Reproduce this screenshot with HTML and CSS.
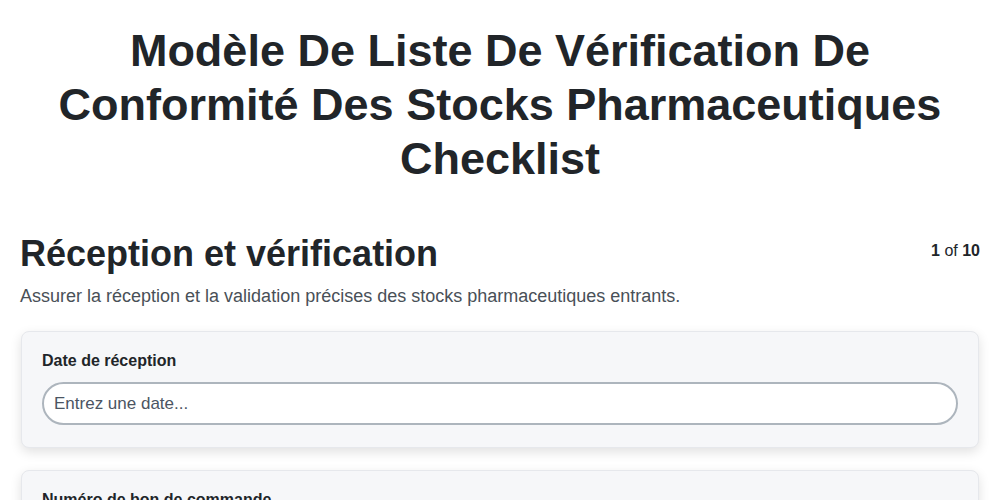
FILE: index.html
```html
<!DOCTYPE html>
<html lang="fr">
<head>
  <meta charset="UTF-8">
  <meta name="viewport" content="width=device-width, initial-scale=1.0">
  <title>Checklist – Conformité des stocks pharmaceutiques</title>
  <link rel="stylesheet" href="styles.css">
</head>
<body>

<h1 class="page-title">Modèle De Liste De Vérification De Conformité Des Stocks Pharmaceutiques Checklist</h1>

<section class="step">
  <div class="step-header">
    <h2>Réception et vérification</h2>
    <span class="step-count"><b>1</b> of <b>10</b></span>
  </div>
  <p class="step-desc">Assurer la réception et la validation précises des stocks pharmaceutiques entrants.</p>

  <div class="field-list">
    <div class="field-card">
      <label for="date">Date de réception</label>
      <input type="text" id="date" class="field-input" placeholder="Entrez une date...">
    </div>

    <div class="field-card">
      <label for="po">Numéro de bon de commande</label>
      <input type="text" id="po" class="field-input" placeholder="Entrez un numéro...">
    </div>
  </div>
</section>

</body>
</html>
```

FILE: styles.css
```css
:root {
  --text: #212529;
  --text-muted: #495057;
  --card-bg: #f6f7f9;
  --card-border: #e6e8ec;
  --input-border: #adb5bd;
}

* {
  margin: 0;
  padding: 0;
  box-sizing: border-box;
}

body {
  font-family: 'Liberation Sans', Arial, sans-serif;
  color: var(--text);
  background: #ffffff;
  padding: 0 20px;
}

.page-title {
  font-size: 45px;
  line-height: 54px;
  text-align: center;
  padding: 24px 30px 0;
  font-weight: bold;
}

.step {
  margin-top: 47px;
}

.step-header {
  display: flex;
  justify-content: space-between;
  align-items: flex-start;
}

.step-header h2 {
  font-size: 36px;
  line-height: 42px;
}

.step-count {
  font-size: 16px;
  padding-top: 9px;
}

.step-desc {
  font-size: 18px;
  color: var(--text-muted);
  margin-top: 11px;
}

.field-list {
  display: flex;
  flex-direction: column;
  gap: 22px;
  margin: 24px 1px 0 1px;
}

.field-card {
  background: var(--card-bg);
  border: 1px solid var(--card-border);
  border-radius: 8px;
  padding: 20px 20px 22px;
  box-shadow: 0 4px 12px rgba(0,0,0,0.12);
}

.field-card label {
  display: block;
  font-size: 16px;
  font-weight: bold;
  margin-bottom: 12px;
}

.field-input {
  width: 100%;
  height: 43px;
  border: 2px solid var(--input-border);
  border-radius: 22px;
  padding: 0 10px;
  font-family: inherit;
  font-size: 17px;
  color: var(--text);
  background: #ffffff;
}

.field-input::placeholder {
  color: #4b5563;
}
```
